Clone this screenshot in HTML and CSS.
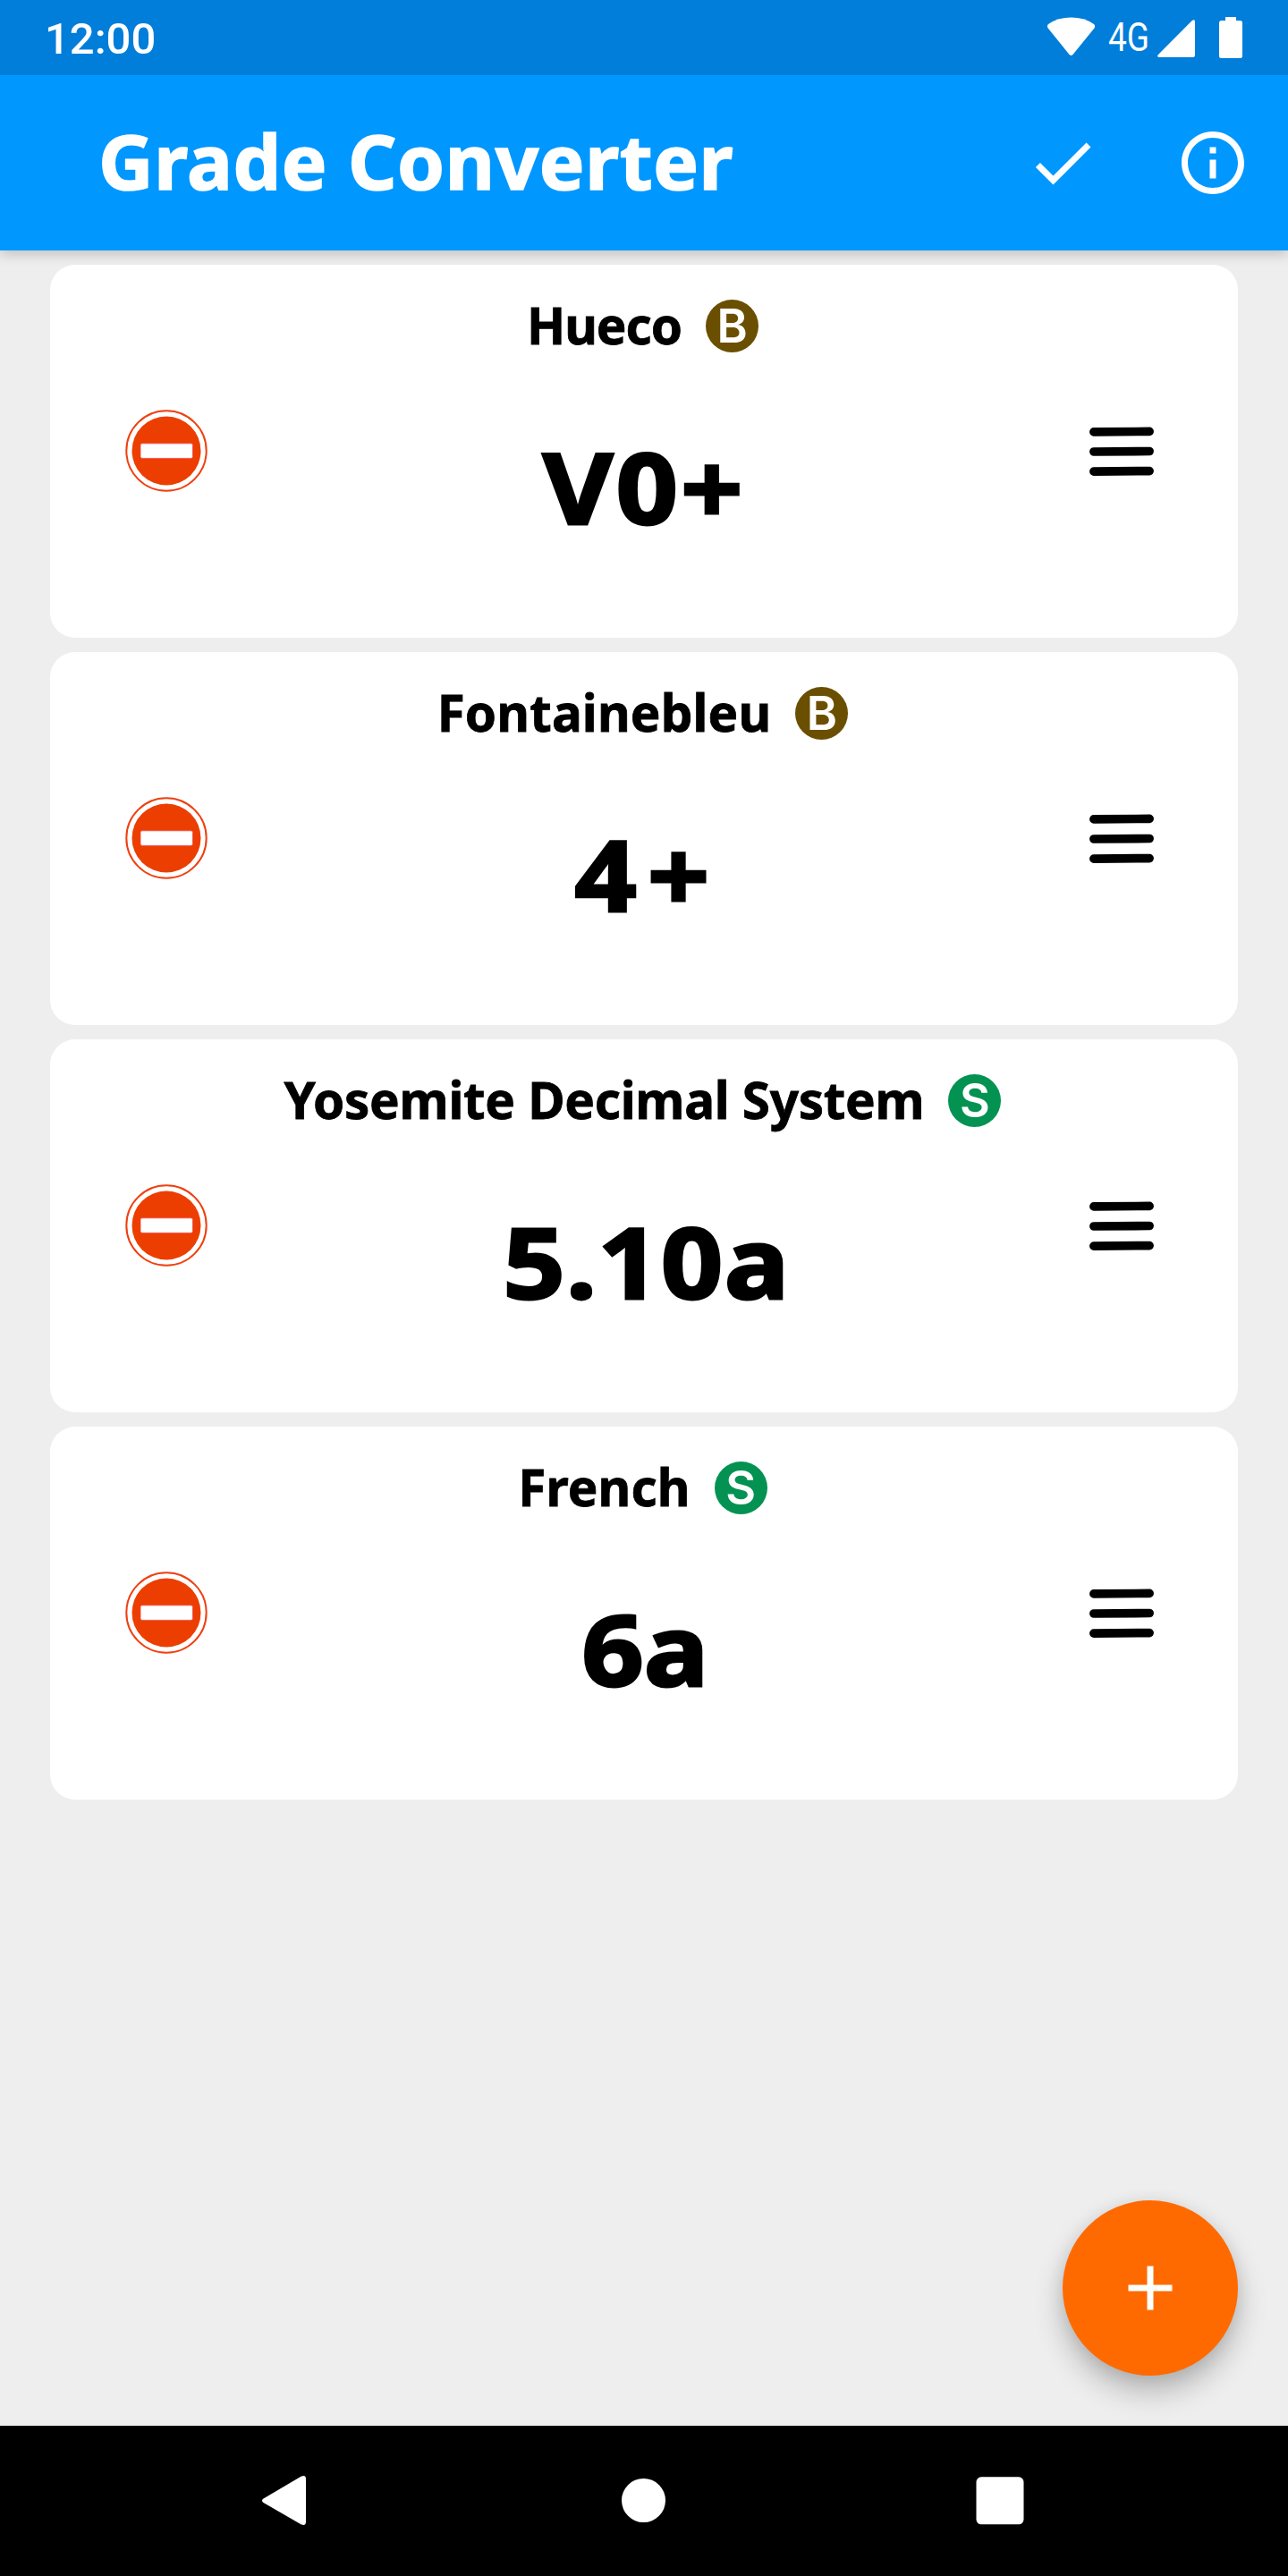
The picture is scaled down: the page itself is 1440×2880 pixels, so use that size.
FILE: index.html
```
<!DOCTYPE html>
<html lang="en">
<head>
<meta charset="utf-8">
<title>Grade Converter</title>
<link rel="stylesheet" href="styles.css">
</head>
<body>
<svg class="defs" aria-hidden="true">
  <symbol id="remove" viewBox="0 0 92 92">
    <circle cx="46" cy="46" r="44.7" fill="none" stroke="#f04010" stroke-width="2"/>
    <circle cx="46" cy="46" r="38.5" fill="#ec3e00"/>
    <rect x="17" y="37.8" width="58.5" height="16.6" rx="1.8" fill="#fff" stroke="#f04848" stroke-width=".8"/>
  </symbol>
  <symbol id="handle" viewBox="0 0 72 56">
    <path d="M4.9 5.9L67.1 5.4M4.9 28L67.1 27.5M4.9 50.1L67.1 49.6" stroke="#000" stroke-width="9.7" stroke-linecap="round"/>
  </symbol>
</svg>

<header class="status">
  <span class="clock">12:00</span>
  <svg class="status-icons" width="230" height="84" viewBox="1200 0 230 84" fill="#fff">
    <path d="M1172 27Q1183 19.600 1197.500 19.600Q1212 19.600 1223 27Q1225 29 1223.500 31.500L1199.500 61Q1197.500 63 1195.500 61L1171.700 31.500Q1170 29 1172 27Z"/>
    <text class="network" x="1239" y="57" textLength="46" lengthAdjust="spacingAndGlyphs">4G</text>
    <path d="M1295 61L1332.500 23.200Q1336 20.700 1336 24.500V61.500Q1336 64 1333.500 64H1296.500Q1292.500 63.500 1295 61Z"/>
    <path d="M1370 19H1382V23H1386.500Q1389 23 1389 25.500V62.500Q1389 65 1386.500 65H1365.500Q1363 65 1363 62.500V25.500Q1363 23 1365.500 23H1370Z"/>
  </svg>
</header>

<div class="appbar">
  <h1>Grade Converter</h1>
  <div class="actions">
    <svg width="84" height="84" viewBox="0 0 24 24" fill="#fff"><path d="M9 16.170L4.830 12l-1.420 1.410L9 19 21 7l-1.410-1.410z"/></svg>
    <svg width="84" height="84" viewBox="0 0 24 24" fill="#fff"><path d="M11 7h2v2h-2zM11 11h2v6h-2zM12 2C6.480 2 2 6.480 2 12s4.480 10 10 10 10-4.480 10-10S17.520 2 12 2zm0 18c-4.410 0-8-3.590-8-8s3.590-8 8-8 8 3.590 8 8-3.590 8-8 8z"/></svg>
  </div>
</div>

<main class="list">
  <section class="card">
    <svg class="remove"><use href="#remove"/></svg>
    <div class="body">
      <div class="head"><h2 class="name hueco">Hueco</h2><span class="badge boulder">B</span></div>
      <div class="grade v0">V0+</div>
    </div>
    <svg class="handle"><use href="#handle"/></svg>
  </section>
  <section class="card">
    <svg class="remove"><use href="#remove"/></svg>
    <div class="body">
      <div class="head"><h2 class="name">Fontainebleu</h2><span class="badge boulder">B</span></div>
      <div class="grade font4">4+</div>
    </div>
    <svg class="handle"><use href="#handle"/></svg>
  </section>
  <section class="card">
    <svg class="remove"><use href="#remove"/></svg>
    <div class="body">
      <div class="head"><h2 class="name yosemite">Yosemite Decimal System</h2><span class="badge sport">S</span></div>
      <div class="grade yds">5.10a</div>
    </div>
    <svg class="handle"><use href="#handle"/></svg>
  </section>
  <section class="card">
    <svg class="remove"><use href="#remove"/></svg>
    <div class="body">
      <div class="head"><h2 class="name">French</h2><span class="badge sport">S</span></div>
      <div class="grade french">6a</div>
    </div>
    <svg class="handle"><use href="#handle"/></svg>
  </section>
  <button class="fab" aria-label="Add">
    <svg width="84" height="84" viewBox="0 0 24 24" fill="#fff"><path d="M19 13h-6v6h-2v-6H5v-2h6V5h2v6h6v2z"/></svg>
  </button>
</main>

<nav class="nav">
  <svg width="60" height="60" viewBox="0 0 60 60" fill="#fff"><path d="M6.500 27.500L48.500 2.700Q54 .500 54 5.500V53.500Q54 58.500 48.500 56.300L6.500 32Q3.500 29.700 6.500 27.500Z"/></svg>
  <svg width="60" height="60" viewBox="0 0 60 60" fill="#fff"><circle cx="31.500" cy="29.500" r="24.500"/></svg>
  <svg width="60" height="60" viewBox="0 0 60 60" fill="#fff"><rect x="3.500" y="3.300" width="53" height="53" rx="5.500"/></svg>
</nav>
</body>
</html>
```
FILE: styles.css
```
* { box-sizing: border-box; }

body {
  margin: 0;
  width: 1440px;
  height: 2880px;
  display: flex;
  flex-direction: column;
  overflow: hidden;
  background: #eee;
  color: #000;
  font-family: "Noto Sans", sans-serif;
}

svg { display: block; }
.defs { display: none; }

.status {
  flex: none;
  z-index: 1;
  height: 84px;
  padding: 0 10px 0 50px;
  display: flex;
  align-items: center;
  justify-content: space-between;
  background: #007ed9;
  color: #fff;
}

.clock {
  font: 500 49px/58px Roboto, sans-serif;
  padding-top: 4px;
}

.status-icons { overflow: visible; }
.network { font: 400 44px Roboto, sans-serif; }

.appbar {
  flex: none;
  height: 196px;
  padding: 0 42px 0 110px;
  display: flex;
  align-items: center;
  justify-content: space-between;
  background: #0097ff;
  color: #fff;
  box-shadow: 0 4px 14px rgba(0, 0, 0, .2);
}

h1 {
  margin: 0;
  padding-bottom: 6px;
  font-size: 85px;
  line-height: 100px;
  font-weight: 700;
  letter-spacing: .6px;
  -webkit-text-stroke: 1.6px;
}

.actions {
  display: flex;
  gap: 84px;
}

.list {
  flex: 1;
  position: relative;
  padding: 16px 56px;
  display: flex;
  flex-direction: column;
  gap: 16px;
}

.card {
  height: 417px;
  padding: 0 94px 0 84px;
  display: flex;
  align-items: center;
  background: #fff;
  border-radius: 28px;
}

.remove { width: 92px; height: 92px; margin-bottom: 1px; }
.handle { width: 72px; height: 56px; }

.body {
  flex: 1;
  align-self: stretch;
  padding: 38px 13px 0 0;
  display: flex;
  flex-direction: column;
  align-items: center;
  gap: 91px;
}

.head {
  display: flex;
  align-items: center;
  gap: 27px;
}

.name {
  margin: 0;
  font-size: 56.5px;
  line-height: 60px;
  font-weight: 700;
  letter-spacing: .15px;
  -webkit-text-stroke: .8px;
}

.hueco { letter-spacing: -1px; }
.yosemite { letter-spacing: -.25px; }

.badge {
  width: 59px;
  height: 59px;
  border-radius: 50%;
  color: #fff;
  font: 600 52px/59px Inter, sans-serif;
  text-align: center;
}

.boulder { background: #6b4f00; }
.sport { background: #049252; }

.grade {
  font-size: 110px;
  line-height: 116px;
  font-weight: 700;
  -webkit-text-stroke: 3px;
  transform: scaleX(1.1);
}

.v0 { letter-spacing: 3px; margin-right: -3px; }
.font4 { letter-spacing: 11px; margin-right: -11px; }
.yds { letter-spacing: 1.3px; margin-right: -9px; }
.french { margin-right: -6px; }

.fab {
  position: absolute;
  right: 56px;
  bottom: 56px;
  width: 196px;
  height: 196px;
  padding: 0;
  border: 0;
  border-radius: 50%;
  display: grid;
  place-items: center;
  background: #ff6a00;
  box-shadow: 0 18px 32px rgba(0, 0, 0, .24), 0 2px 18px rgba(0, 0, 0, .08);
}

.nav {
  flex: none;
  height: 168px;
  padding: 0 292px 0 288px;
  display: flex;
  align-items: center;
  justify-content: space-between;
  background: #000;
}
```
